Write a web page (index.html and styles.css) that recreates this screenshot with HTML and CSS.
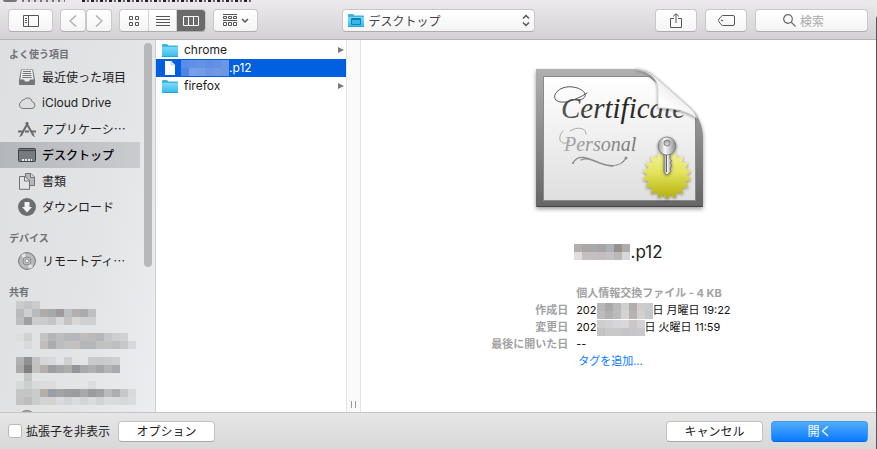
FILE: index.html
```html
<!DOCTYPE html>
<html lang="ja">
<head>
<meta charset="utf-8">
<title>ファイルを開く</title>
<link rel="stylesheet" href="styles.css">
</head>
<body>
<svg class="defs" aria-hidden="true">
  <defs>
    <linearGradient id="folderFill" x1="0" y1="0" x2="0" y2="1"><stop offset="0" stop-color="#7dd9f8"/><stop offset="1" stop-color="#35bdee"/></linearGradient>
    <symbol id="folder" viewBox="0 0 16 14">
      <path d="M0 2Q0 1 1 1H5L6.500 2.500H15Q16 2.500 16 3.500V13H0Z" fill="#3fb4de"/>
      <path d="M0 4H16V13Q16 13.500 15 13.500H1Q0 13.500 0 13Z" fill="url(#folderFill)"/>
      <path d="M0 13.500H16" stroke="#2ba3d2"/>
    </symbol>
  </defs>
</svg>
<div class="behind" aria-hidden="true"><i class="dot"></i><i class="word"></i><i class="glyphs"></i></div>
<main class="dialog">
  <header class="toolbar">
    <div class="tools start">
      <button class="tool wide" aria-label="サイドバー"><svg width="16" height="12" viewBox="0 0 16 12" fill="none" stroke="#555"><path d="M.5.5H15.500V11.500H.5ZM5.500.5V11.500M2 3.500H4M2 5.500H4M2 7.500H4"/></svg></button>
      <div class="pair">
        <button class="tool nav" aria-label="戻る"><svg width="8" height="12" viewBox="0 0 8 12" fill="none" stroke="#b2b2b2" stroke-width="1.500"><path d="M7 .5 1 6 7 11.500"/></svg></button>
        <button class="tool nav" aria-label="進む"><svg width="8" height="12" viewBox="0 0 8 12" fill="none" stroke="#b2b2b2" stroke-width="1.500"><path d="M1 .5 7 6 1 11.500"/></svg></button>
      </div>
      <div class="segments">
        <button class="seg" aria-label="アイコン"><svg width="10" height="10" viewBox="0 0 10 10" fill="none" stroke="#555"><path d="M.5.5H3.500V3.500H.5ZM6.500.5H9.500V3.500H6.500ZM.5 6.500H3.500V9.500H.5ZM6.500 6.500H9.500V9.500H6.500Z"/></svg></button>
        <button class="seg" aria-label="リスト"><svg width="14" height="10" viewBox="0 0 14 10" stroke="#555"><path d="M0 .5H14M0 3.500H14M0 6.500H14M0 9.500H14"/></svg></button>
        <button class="seg on" aria-label="カラム"><svg width="16" height="10" viewBox="0 0 16 10" fill="none" stroke="#fff"><path d="M.5.5H15.500V9.500H.5ZM5.500.5V9.500M10.500.5V9.500"/></svg></button>
      </div>
      <button class="tool wide" aria-label="グループ"><svg width="26" height="13" viewBox="0 0 26 13" fill="none" stroke="#555"><path d="M0 .5H14M0 6.500H14M.5 2.500H3.500V4.500H.5ZM5.500 2.500H8.500V4.500H5.500ZM10.500 2.500H13.500V4.500H10.500ZM.5 8.500H3.500V11.500H.5ZM5.500 8.500H8.500V11.500H5.500ZM10.500 8.500H13.500V11.500H10.500Z"/><path d="M19 5 22 8 25 5" stroke-width="1.500"/></svg></button>
    </div>
    <label class="place">
      <svg class="place-icon" width="16" height="14"><use href="#folder"/><path d="M3.500 5.500H12.500V11.500H3.500ZM3.500 6.500H12.500" fill="#35b7ea" stroke="#137fb4"/></svg>
      <select aria-label="場所"><option>デスクトップ</option></select>
      <svg class="place-arrows" width="8" height="13" viewBox="0 0 8 13" fill="none" stroke="#555" stroke-width="1.500"><path d="M1 4.500 4 1.500 7 4.500M1 8.500 4 11.500 7 8.500"/></svg>
    </label>
    <div class="tools end">
      <button class="tool" aria-label="共有"><svg width="12" height="15" viewBox="0 0 12 15" fill="none" stroke="#555"><path d="M4 5.500H.5V14.500H11.500V5.500H8M6 10V1M3 3.500 6 .7 9 3.500"/></svg></button>
      <button class="tool" aria-label="タグ"><svg width="17" height="11" viewBox="0 0 17 11" fill="none" stroke="#555"><path d="M4.500.5H15Q16.500.5 16.500 2V9Q16.500 10.500 15 10.500H4.500Q3.500 10.500 .8 6.500Q.3 5.500 .8 4.500Q3.500.5 4.500.5Z"/><circle cx="4" cy="5.500" r=".6"/></svg></button>
      <label class="search"><svg width="13" height="13" viewBox="0 0 13 13" fill="none" stroke="#666" stroke-width="1.200"><circle cx="5" cy="5" r="4.300"/><path d="M8.200 8.200 12.500 12.500"/></svg><input type="text" placeholder="検索" aria-label="検索"></label>
    </div>
  </header>

  <div class="panes">
    <nav class="sidebar">
      <div class="places">
        <h2>よく使う項目</h2>
        <a href="#"><svg viewBox="0 0 18 18"><path d="M3 1.500H15L17 12V16Q17 17 16 17H2Q1 17 1 16V12Z" fill="#737679"/><path d="M3.700 2H14.300L15.700 11.500H12L11 13.500H7L6 11.500H2.300Z" fill="#e8e9ea"/><path d="M5 3.500H13M4.700 5.500H13.300M4.500 7.500H13.500M4.200 9.500H13.800" stroke="#777" fill="none"/></svg><span>最近使った項目</span></a>
        <a href="#"><svg viewBox="0 0 18 18"><path d="M4.500 14.500A3.700 3.700 0 0 1 3.300 7.600 3 3 0 0 1 6.200 5.600 4.500 4.500 0 0 1 14.200 7.800 3.400 3.400 0 0 1 14 14.500Z" fill="#dcdddf" stroke="#76797c"/></svg><span class="latin">iCloud Drive</span></a>
        <a href="#"><svg viewBox="0 0 18 18" fill="none" stroke="#686b6e"><path d="M10 2.500 3 15.500M8 2.500 15.500 15.500" stroke-width="2"/><path d="M0 11.500H5M7 11.500H11M13 11.500H18" stroke-width="2"/><path d="M2.500 15 2 17M15.500 15 16.500 17"/></svg><span>アプリケーシ…</span></a>
        <a href="#" class="current"><svg viewBox="0 0 18 18"><rect x=".5" y="2.500" width="17" height="13" rx="1" fill="#777b80" stroke="#3f4246"/><path d="M1 4.500H17" stroke="#42464a"/><path d="M4 13H6V15H4ZM7 13H9V15H7ZM10 13H12V15H10ZM13 13H14V15H13Z" fill="#e5e7e9"/></svg><span>デスクトップ</span></a>
        <a href="#"><svg viewBox="0 0 18 18" stroke="#707376"><path d="M7.500 1.500H13L16.500 5V13.500H7.500Z" fill="#b5b7b9"/><path d="M12.500 1.500V5.500H16.500" fill="#ddd"/><path d="M1.500 4.500H7L11.500 8.500V17.300H1.500Z" fill="#e2e3e5"/><path d="M6.500 4.500V9H11.500" fill="none"/></svg><span>書類</span></a>
        <a href="#"><svg viewBox="0 0 18 18"><circle cx="9" cy="9" r="9" fill="#6b6d70"/><path d="M6.500 4H11.500V9H14L9 14.500 4 9H6.500Z" fill="#f1f2f3"/></svg><span>ダウンロード</span></a>
        <h2>デバイス</h2>
        <a href="#"><svg viewBox="0 0 18 18" fill="none"><circle cx="9" cy="9" r="8.400" fill="#b9babb" stroke="#707274"/><path d="M9 9 3 3.500A8 8 0 0 1 7 1.300ZM9 9 15 14.500A8 8 0 0 1 11 16.700Z" fill="#e3e3e4"/><circle cx="9" cy="9" r="4" stroke="#88898b" fill="#c8c9ca"/><circle cx="9" cy="9" r="2" stroke="#88898b" fill="#eee"/></svg><span>リモートディ…</span></a>
        <h2>共有</h2>
        <div class="mosaic shared" data-rows="cbcbcb c2c4c5 cbcccd|b9babc cdcecf b8bbbd b0aca8 a4a9ad 9e9a9b babfc1 b2afac a9acaf bcc0c2|bbbdbf 9fa0a2 cccccc cacbcc c4c5c6 d9d8d8 c4c4c4 d9d8d7 cfd0d1 ced0d1|-|dedede d0d1d1 - c4c4c4 b3b5b6 bbbdbe b6b9ba b5b8ba c0bcb9 bababa b4b7b8 c4c6c7 cdcfd0 d0d1d2|- d9dada - c1bdba aaacae bbbdbe bfc1c2 c3c0be b5b6b6 b5b7b8 c0c2c2 c1c3c3 bcbfc0 c6c9ca d6d8d9|-|b0b1b1 919191 c1c2c3 d8d6d4 d5dae1 - cfd0d1 - - c9cbcb c8c9ca cacccd cdcfd0|a9aaaa 7f7f7f c0c1c1 b5afa7 9c9ea2 a4a6aa afadab 92969a a8a9ab adafb0 a3a7a7 b5b3b3 a7abb0|- c6c6c6|d8d9d9 cdcecf d8d9d9 dcdcdc dcdcdc - - - - dcddde|c4c5c5 c5c5c6 cacbcb b5afa9 989fa9 a3a4a5 9c9e9f 9a9e9e a8a9ab 999d9c a0a4a4 b9bbbc acafb0 c5c8c9 d8dadb|c4c4c4 bdbdbe cacbcb d2d3d3 d3d2d1 dadbdc d3d4d5 dadbdc d3d4d5 dadbdc d3d4d5 dadbdc d8dadb d6d8d9 dadcdd"></div>
        <svg class="partial" viewBox="0 0 18 18"><circle cx="9" cy="9" r="8.400" fill="#bbb" stroke="#707274"/></svg>
      </div>
      <div class="track"><div class="thumb"></div></div>
    </nav>

    <section class="files">
      <a href="#"><svg width="16" height="14"><use href="#folder"/></svg><span>chrome</span><i class="more"></i></a>
      <a href="#" class="picked"><svg width="16" height="16" viewBox="0 0 16 16"><path d="M3 1H9L13 5V15H3Z" fill="#fff"/><path d="M9 1V5H13" fill="#d9e3f3" stroke="#a9bfe2" stroke-width=".5"/></svg><span class="name"><span class="mosaic" data-rows="5c8ce6 6190e7 6591e6 618ee5 658fe3 6a97e8|4f83e4 789fe9 789de7 6b96e7 7196e2 6c95e6"></span>.p12</span></a>
      <a href="#"><svg width="16" height="14"><use href="#folder"/></svg><span>firefox</span><i class="more"></i></a>
    </section>
    <div class="splitter"><i></i></div>

    <section class="preview">
      <svg class="certificate" width="180" height="150" viewBox="0 0 180 150" role="img" aria-label="Certificate Personal">
        <defs>
          <linearGradient id="frame" x1="0" y1="0" x2="0" y2="1"><stop offset="0" stop-color="#b0b0b0"/><stop offset="1" stop-color="#656565"/></linearGradient>
          <linearGradient id="paper" x1="0" y1="0" x2="0" y2="1"><stop offset="0" stop-color="#fff"/><stop offset="1" stop-color="#dfdfdf"/></linearGradient>
          <linearGradient id="curl" gradientUnits="userSpaceOnUse" x1="126" y1="48" x2="144" y2="24"><stop offset="0" stop-color="#e6e6e6"/><stop offset=".4" stop-color="#fff"/><stop offset="1" stop-color="#ececec"/></linearGradient>
          <linearGradient id="gold" x1="0" y1="0" x2="0" y2="1"><stop offset="0" stop-color="#f5f5a0"/><stop offset=".45" stop-color="#e4e35d"/><stop offset="1" stop-color="#b0aa00"/></linearGradient>
          <linearGradient id="metal" x1="0" y1="0" x2="1" y2="0"><stop offset="0" stop-color="#999"/><stop offset=".4" stop-color="#f8f8f8"/><stop offset="1" stop-color="#888"/></linearGradient>
          <linearGradient id="ink" x1="0" y1="0" x2="1" y2="0"><stop offset="0" stop-color="#555"/><stop offset=".5" stop-color="#222"/><stop offset="1" stop-color="#555"/></linearGradient>
          <linearGradient id="paleInk" x1="0" y1="0" x2="1" y2="0"><stop offset="0" stop-color="#aaa"/><stop offset="1" stop-color="#777"/></linearGradient>
          <path id="spike" d="M138 86 159.650 123.500H116.350Z"/>
          <clipPath id="sealShape"><use href="#spike"/><use href="#spike" transform="rotate(20 138 111)"/><use href="#spike" transform="rotate(40 138 111)"/><use href="#spike" transform="rotate(60 138 111)"/><use href="#spike" transform="rotate(80 138 111)"/><use href="#spike" transform="rotate(100 138 111)"/></clipPath>
          <filter id="soft" x="-10%" y="-10%" width="120%" height="125%"><feDropShadow dx="0" dy="2" stdDeviation="2" flood-opacity=".4"/></filter>
          <filter id="lift" x="-20%" y="-20%" width="140%" height="150%"><feDropShadow dx="0" dy="1" stdDeviation="1.500" flood-opacity=".45"/></filter>
        </defs>
        <path d="M7 5H105Q118 5 125 12L160 43Q174 55 174 74V143H7Z" fill="url(#frame)" filter="url(#soft)"/>
        <path d="M8 142.500H173.500" stroke="#444" fill="none"/>
        <path d="M14.500 12.500H120L166.500 50V136.500H14.500Z" fill="url(#paper)" stroke="#8a8a8a"/>
        <g fill="none" stroke="#555" stroke-linecap="round">
          <path d="M50 36C61 34 57 25 44 23C31 21 22 31 27 36C32 41 46 37 58 29"/>
          <path d="M34 67C26 76 34 83 41 77M41 67C48 62 58 64 57 70" stroke="#aaa"/>
          <path d="M44 99C50 88 62 96 71 99C83 103 92 103 97 94M52 96C61 91 71 103 84 102" stroke="#8b8b8b" stroke-width="1.300"/>
          <circle cx="44" cy="99" r="1" fill="#8b8b8b" stroke="none"/><circle cx="97" cy="94" r="1.500" fill="#8b8b8b" stroke="none"/>
        </g>
        <text x="32" y="54" class="cert-title" fill="url(#ink)">Certificate</text>
        <text x="35" y="87" class="cert-kind" fill="url(#paleInk)">Personal</text>
        <path d="M107 5Q128 9 129 25V44Q152 43 168 54Q166 48 160 43L125 12Q118 6 107 5Z" fill="url(#curl)" stroke="#c4c4c4" stroke-width=".6" filter="url(#lift)"/>
        <g filter="url(#lift)"><g clip-path="url(#sealShape)"><rect x="112" y="85" width="52" height="52" fill="url(#gold)"/></g></g>
        <g stroke="#777" stroke-width=".8" filter="url(#lift)">
          <path d="M135 89H141V95L143 97 141 99 143 102 141 104 142 107 138 111 135 108Z" fill="url(#metal)"/>
          <path fill-rule="evenodd" d="M138 73A9 9 0 1 1 138 91A9 9 0 1 1 138 73ZM138 76A3 3 0 1 0 138 82A3 3 0 1 0 138 76Z" fill="url(#metal)"/>
          <path d="M137.500 91V108" stroke="#444"/>
        </g>
      </svg>
      <h1 class="name"><span class="mosaic" data-rows="b3afaf aca7a6 a5a8ac aaa3a3 acb0b7 96918f b0aba8|dfdddd c5c0be c0bfc2 c5bdbb c0c2c5 bcb7b5 d4dadb"></span>.p12</h1>
      <dl>
        <dt></dt><dd class="kind">個人情報交換ファイル - 4 KB</dd>
        <dt>作成日</dt><dd><span>202</span><span class="mosaic" data-rows="b8b6b7 aaa8a9 b8b9bb d0cfce b3adac d1cbcc c9c9ce|bdbcbd b2b0b1 babbbc d5d3d2 b8b2b0 d4cfd0 c3c7cb"></span><span>日 月曜日 19:22</span></dd>
        <dt>変更日</dt><dd><span>202</span><span class="mosaic" data-rows="cfcdce d2d1d2 d4d7d9 d9d7d8 cbc7c8 d3d1d3|c4c3c4 cac8ca c9c9ca c7c4c6 c7c7ca c8c7cb"></span><span>日 火曜日 11:59</span></dd>
        <dt>最後に開いた日</dt><dd>--</dd>
        <dt></dt><dd><a href="#">タグを追加...</a></dd>
      </dl>
    </section>
  </div>

  <footer class="actions">
    <label class="check"><input type="checkbox"><span>拡張子を非表示</span></label>
    <button class="push">オプション</button>
    <span class="space"></span>
    <button class="push">キャンセル</button>
    <button class="push primary">開く</button>
  </footer>
</main>
<script src="mosaic.js"></script>
</body>
</html>
```
FILE: styles.css
```css
* { box-sizing: border-box; }
body {
  margin: 0;
  height: 100vh;
  display: flex;
  flex-direction: column;
  overflow: hidden;
  background: linear-gradient(#e6e6e6 16px, #55565a 18px);
  color: #222;
  font: 12px/18px "Noto Sans CJK JP", sans-serif;
}
button, input, select { font: inherit; color: inherit; margin: 0; padding: 0; }
a { color: inherit; text-decoration: none; }
h1, h2, dl, dd { margin: 0; }
.defs { position: absolute; width: 0; height: 0; }

.behind { display: flex; flex: none; height: 2px; padding-left: 3px; background: #e9e9e9; }
.dot { width: 14px; background: #777; border-radius: 0 0 7px 7px; }
.word { width: 43px; margin-left: 5px; background: repeating-linear-gradient(90deg, #777 0 2px, #e0e0e0 2px 6px); }
.glyphs { width: 170px; margin-left: 17px; background: repeating-linear-gradient(90deg, #222 0 3px, #ddd 3px 5px, #666 5px 7px, #eee 7px 9px); }

.dialog {
  flex: 1;
  min-height: 0;
  margin-right: 1px;
  display: flex;
  flex-direction: column;
  background: #fff;
  border-radius: 5px 5px 0 0;
  overflow: hidden;
}
.toolbar {
  flex: none;
  display: grid;
  grid-template-columns: 1fr auto 1fr;
  align-items: center;
  height: 38px;
  padding: 0 8px;
  border-bottom: 1px solid #b5b3b5;
  background: linear-gradient(#ebe9eb, #d3d1d3);
}
.tools { display: flex; gap: 8px; }
.start { gap: 7px; }
.end { justify-content: flex-end; }
.tool, .segments, .search, .place select {
  height: 23px;
  border: 1px solid #c9c7c9;
  border-bottom-color: #aeacae;
  border-radius: 4px;
  background: linear-gradient(#fff, #f4f4f4);
}
.tool { display: flex; align-items: center; justify-content: center; width: 42px; }
.tool.wide { width: 45px; }
.pair { display: flex; }
.tool.nav { width: 26px; }
.segments { display: flex; width: 87px; overflow: hidden; }
.seg { flex: 1; display: flex; align-items: center; justify-content: center; border: 0; border-right: 1px solid #d4d4d4; background: none; }
.seg.on { border: 0; background: #6b6b6b; }
.place { position: relative; display: block; }
.place select { display: block; width: 193px; padding: 0 26px; appearance: none; color: #444; }
.place-icon { position: absolute; left: 6px; top: 4px; }
.place-arrows { position: absolute; right: 5px; top: 5px; }
.search { display: flex; align-items: center; gap: 4px; width: 113px; padding: 0 4px 0 27px; }
.search svg { flex: none; }
.search input { width: 100%; min-width: 0; border: 0; background: none; outline: 0; }
.search input::placeholder { color: #aaa; }

.panes { flex: 1; min-height: 0; display: flex; }
.sidebar {
  flex: none;
  display: flex;
  width: 156px;
  border-right: 1px solid #d0d0d2;
  background: linear-gradient(100deg, #dedfe1, #e3e4e6 60%, #ecedf0);
  overflow: hidden;
}
.places { flex: none; width: 140px; padding-top: 4px; }
.places h2 { padding: 8px 9px 0; font-size: 10px; line-height: 20px; font-weight: 700; color: #707275; }
.places h2:first-child { padding-top: 0; }
.places a { display: flex; align-items: center; gap: 6px; height: 26px; padding-left: 18px; white-space: nowrap; }
.places a svg { flex: none; width: 18px; height: 18px; }
.places a.current { background: linear-gradient(90deg, #b3b6ba, #c9cbcf); font-weight: 500; color: #000; }
.latin { font-family: Inter, sans-serif; }
.shared { margin: -1px 0 0 16px; }
.partial { display: block; width: 18px; height: 18px; margin: 5px 0 0 18px; }
.track { flex: 1; padding: 3px 3px 0 4px; }
.thumb { width: 8px; height: 224px; border-radius: 4px; background: #b7b8ba; }

.mosaic { display: inline-block; line-height: 0; }
.mosaic.shared { display: block; }
.mosaic svg { display: block; }

.files { flex: none; width: 190px; padding-top: 1px; font-family: Inter, sans-serif; }
.files a { display: flex; align-items: center; gap: 6px; height: 18px; padding: 0 2px 0 6px; }
.files svg { flex: none; }
.more { margin-left: auto; border: solid transparent; border-width: 3px 0 3px 6px; border-left-color: #7b7b7b; }
.files .picked { background: #0060df; color: #fff; }
.name { display: flex; align-items: center; }
.files .name { margin-left: -3px; }
.splitter { flex: none; display: flex; align-items: flex-end; justify-content: center; width: 15px; padding-bottom: 4px; border: solid #e4e4e4; border-width: 0 1px; background: #fafafa; }
.splitter i { width: 5px; height: 7px; border: solid #999; border-width: 0 1px; }

.preview { flex: 1; min-width: 0; padding-top: 24px; font-family: Inter, "Noto Sans CJK JP", sans-serif; }
.certificate { display: block; margin: 0 auto; }
.cert-title { font: italic 29px "Liberation Serif", serif; }
.cert-kind { font: italic 20px "Liberation Serif", serif; }
.preview .name { justify-content: center; margin-top: 28px; font-size: 17px; line-height: 20px; font-weight: 400; }
.preview dl { display: grid; grid-template-columns: 41% 59%; margin-top: 23px; font-size: 11px; line-height: 17px; }
.preview dt { padding-right: 4px; text-align: right; font-weight: 700; color: #a2a2a2; }
.preview dd { display: flex; align-items: center; height: 17px; padding-left: 4px; color: #111; white-space: pre; }
.preview .kind { font-weight: 700; color: #a2a2a2; }
.preview dd a { padding-left: 2px; color: #0a7bff; }

.actions {
  flex: none;
  display: flex;
  align-items: center;
  gap: 8px;
  height: 37px;
  padding: 0 8px;
  border-top: 1px solid #c6c6c6;
  background: linear-gradient(#e6e6e6, #d8d8d8);
}
.check { display: flex; align-items: center; gap: 4px; }
.check input { appearance: none; width: 14px; height: 14px; border: 1px solid #b9b9b9; border-radius: 3px; background: #fff; }
.push { width: 97px; height: 21px; border: 1px solid #c2c2c2; border-bottom-color: #a8a8a8; border-radius: 4px; background: #fff; line-height: 18px; }
.space { flex: 1; }
.primary { border-color: #3f9cf5; border-bottom-color: #0866e0; background: linear-gradient(#52acfb, #0a7bff); color: #fff; }
```
FILE: mosaic.js
```js
// Paints the 8px tiles that hide private names; "-" leaves a tile empty.
const NS = "http://www.w3.org/2000/svg";
const TILE = 8;

document.querySelectorAll(".mosaic").forEach((host) => {
  const rows = host.dataset.rows.split("|").map((row) => row.split(" "));
  const svg = document.createElementNS(NS, "svg");
  svg.setAttribute("width", TILE * Math.max(...rows.map((row) => row.length)));
  svg.setAttribute("height", TILE * rows.length);
  rows.forEach((row, y) => row.forEach((color, x) => {
    if (color === "-") return;
    const rect = document.createElementNS(NS, "rect");
    rect.setAttribute("x", x * TILE);
    rect.setAttribute("y", y * TILE);
    rect.setAttribute("width", TILE);
    rect.setAttribute("height", TILE);
    rect.setAttribute("fill", "#" + color);
    svg.append(rect);
  }));
  host.append(svg);
});
```
